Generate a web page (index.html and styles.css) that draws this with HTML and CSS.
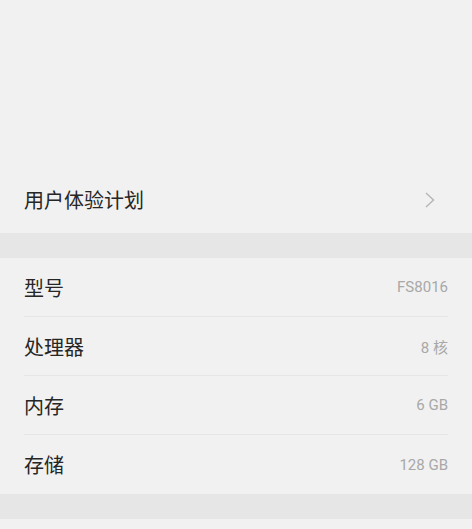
FILE: index.html
```html
<!DOCTYPE html>
<html lang="zh-CN">
<head>
  <meta charset="UTF-8">
  <meta name="viewport" content="width=device-width, initial-scale=1.0">
  <title>关于手机</title>
  <link rel="stylesheet" href="styles.css">
</head>
<body>
  <div class="page">
    <div class="top-space"></div>

    <div class="group">
      <div class="row row-link">
        <span class="label">用户体验计划</span>
        <svg class="chevron" width="12" height="18" viewBox="0 0 12 18">
          <path d="M2 2 L9.5 9 L2 16" fill="none" stroke="#b5b5b5" stroke-width="1.4"/>
        </svg>
      </div>
    </div>

    <div class="band"></div>

    <div class="group">
      <div class="row">
        <span class="label">型号</span>
        <span class="value">FS8016</span>
      </div>
      <div class="row">
        <span class="label">处理器</span>
        <span class="value">8 核</span>
      </div>
      <div class="row">
        <span class="label">内存</span>
        <span class="value">6 GB</span>
      </div>
      <div class="row">
        <span class="label">存储</span>
        <span class="value">128 GB</span>
      </div>
    </div>

    <div class="band"></div>
  </div>
</body>
</html>
```

FILE: styles.css
```css
body {
  margin: 0;
  background-color: #f1f1f1;
  font-family: Roboto, "Noto Sans CJK SC", sans-serif;
}

.page {
  width: 472px;
  height: 529px;
  overflow: hidden;
}

.top-space {
  height: 170px;
}

.group {
  padding: 0 24px;
}

.row {
  display: flex;
  justify-content: space-between;
  align-items: center;
  box-sizing: border-box;
  height: 59px;
  border-bottom: 1px solid #e6e6e6;
}

.row-link {
  height: 63px;
  padding-bottom: 4px;
}

.group .row:last-child {
  border-bottom: none;
}

.label {
  font-size: 20px;
  color: #262626;
}

.value {
  font-size: 15px;
  color: #a8a8a8;
}

.chevron {
  margin-right: 12px;
}

.band {
  height: 25px;
  background-color: #e6e6e6;
}
```
